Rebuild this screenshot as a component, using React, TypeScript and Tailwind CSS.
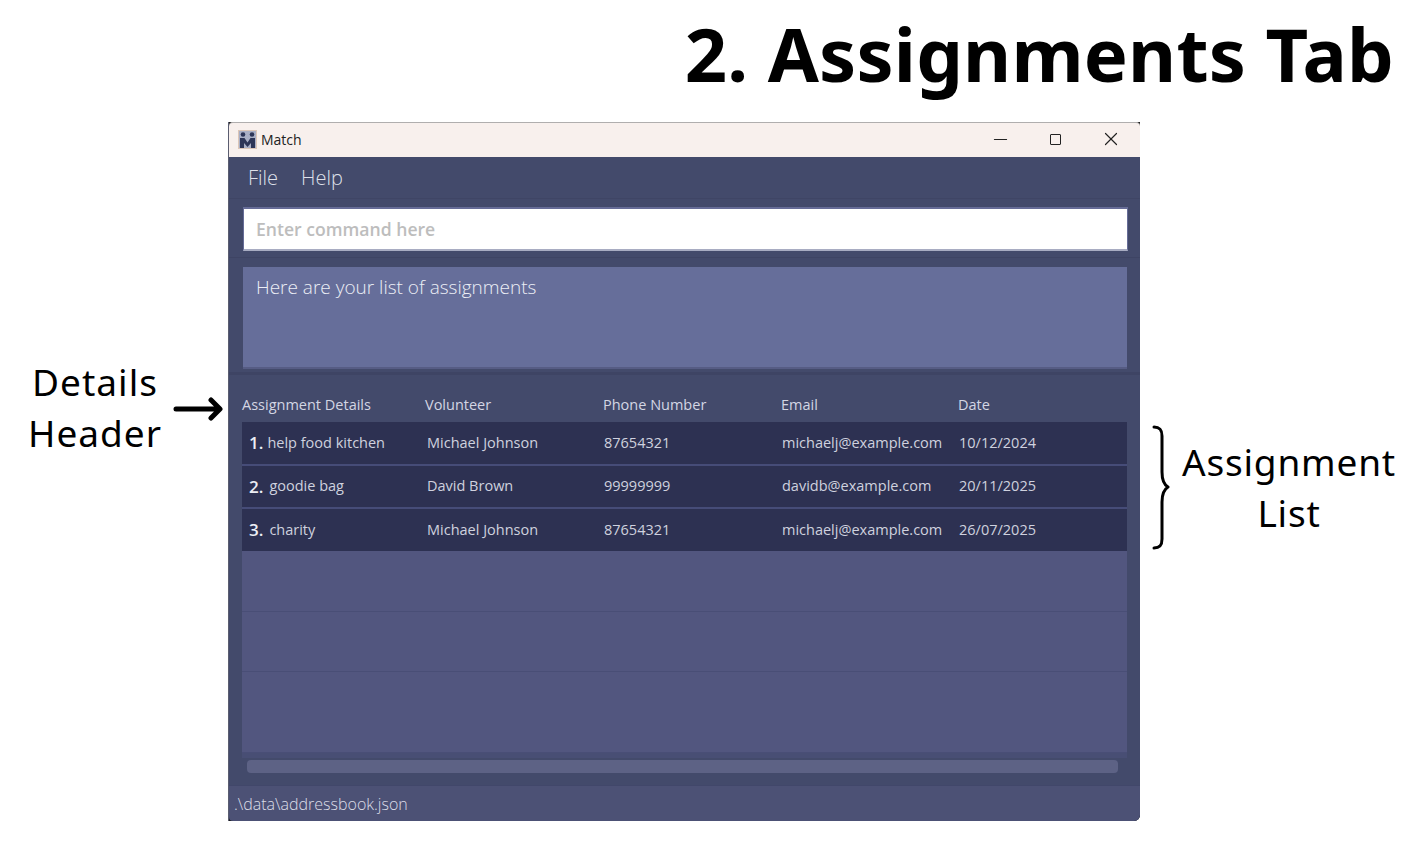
import { Minus, X } from 'lucide-react';

const columns = ['Assignment Details', 'Volunteer', 'Phone Number', 'Email', 'Date'];

const assignments = [
  { num: '1.', name: 'help food kitchen', gap: 'ml-[4px]', row: 'h-[43.500px] border-b-2', volunteer: 'Michael Johnson', phone: '87654321', email: 'michaelj@example.com', date: '10/12/2024' },
  { num: '2.', name: 'goodie bag', gap: 'ml-[6px]', row: 'h-[43.500px] border-b-2', volunteer: 'David Brown', phone: '99999999', email: 'davidb@example.com', date: '20/11/2025' },
  { num: '3.', name: 'charity', gap: 'ml-[6px]', row: 'h-[42px]', volunteer: 'Michael Johnson', phone: '87654321', email: 'michaelj@example.com', date: '26/07/2025' },
];

const AppLogo = () => (
  <svg width="19" height="19" viewBox="0 0 19 19" className="shrink-0">
    <rect width="19" height="19" fill="#dcc6b8" />
    <rect x="1" y="1" width="17" height="17" fill="#a9afc6" />
    <circle cx="5" cy="4.500" r="2.300" fill="#2d3558" />
    <circle cx="14" cy="4.500" r="2.300" fill="#2d3558" />
    <path d="M2 8h4.500l3 4.500 3-4.500H17v10h-4v-5l-3.500 4L6 13v5H2z" fill="#2d3558" />
  </svg>
);

export default function App() {
  return (
    <div className="w-[1414px] h-[844px] overflow-hidden bg-white text-black font-['Noto_Sans',sans-serif]">
      {/* Page title */}
      <div className="h-[122px] pr-[20px] pt-[9px] text-right text-[74px] leading-[90px] font-bold tracking-[0.2px] whitespace-nowrap">
        2. Assignments Tab
      </div>

      <div className="flex">
        {/* Left annotation */}
        <div className="w-[228px] shrink-0 flex items-start pt-[234px] pl-[25px]">
          <div className="w-[140px] text-center text-[37px] leading-[51px] tracking-[1px] shrink-0">
            <div>Details</div>
            <div>Header</div>
          </div>
          <svg width="50" height="26" viewBox="0 0 50 26" className="ml-[8px] mt-[40px] shrink-0" fill="none" stroke="#000" strokeWidth="5" strokeLinecap="round" strokeLinejoin="round">
            <path d="M3 13h43M38 4l9 9-9 9" />
          </svg>
        </div>

        {/* App window */}
        <div className="w-[912px] h-[699px] shrink-0 flex flex-col bg-[#434a6b] border-l border-[#5a5d70] rounded-br-[6px]">
          <div className="h-[35px] shrink-0 bg-[#1c1c1c]">
            <div className="h-full flex items-center pb-[2px] rounded-t-[4px] bg-[#f8f0ed] border-t border-[#b0aeae] font-['Open_Sans',sans-serif] text-[14px] text-[#222]">
              <div className="ml-[9px]"><AppLogo /></div>
              <span className="ml-[4px]">Match</span>
              <div className="ml-auto flex items-center text-[#222]">
                <Minus size={21} strokeWidth={1.2} className="mr-[39px]" />
                <div className="w-[11px] h-[11px] rounded-[1px] border-[1.5px] border-[#222] mr-[39px]" />
                <X size={22} strokeWidth={1.3} className="mr-[18px]" />
              </div>
            </div>
          </div>

          <div className="h-[42px] shrink-0 flex items-center pl-[19px] gap-[23px] text-[20px] font-light text-[#dfe1ea] border-b border-[#3f4565] font-['Open_Sans',sans-serif]">
            <span>File</span>
            <span>Help</span>
          </div>

          <div className="h-[59px] shrink-0 pl-[14px] pr-[12px] pt-[8px] border-b border-[#3e4464]">
            <div className="h-[44px] bg-white border-t-2 border-x border-[#666c97] border-b-2 border-b-[#a8acc2] flex items-center pl-[12px] text-[17.600px] font-semibold text-[#bdbdbd] font-['Open_Sans',sans-serif]">
              Enter command here
            </div>
          </div>

          <div className="h-[117px] shrink-0 pl-[14px] pr-[13px] pt-[9px] border-b-[3px] border-[#3e4464]">
            <div className="h-[102px] bg-[#666e9a] border-b-2 border-[#565c84] pl-[13px] pt-[6px] text-[19px] leading-[28px] font-light text-[#eceef6] font-['Open_Sans',sans-serif]">
              Here are your list of assignments
            </div>
          </div>

          <div className="flex-1 min-h-0 flex flex-col pl-[13px] pr-[13px] text-[14.500px] font-['Open_Sans',sans-serif]">
            {/* Details header */}
            <div className="h-[47px] shrink-0 grid grid-cols-[183px_178px_178px_177px_1fr] items-end pb-[6px] text-[#d3d6e4]">
              {columns.map((col) => (
                <div key={col}>{col}</div>
              ))}
            </div>

            {/* Assignment list */}
            <div className="h-[336px] shrink-0 flex flex-col bg-[#52567f] border-b-[5px] border-[#484e74]">
              {assignments.map((a) => (
                <div key={a.num} className={`${a.row} shrink-0 grid grid-cols-[185px_177px_178px_177px_1fr] items-center whitespace-nowrap bg-[#2d3152] border-[#464c78] text-[#cfd1df]`}>
                  <div className="flex items-center pl-[7px]">
                    <span className="text-[17px] font-semibold text-[#eceef5]">{a.num}</span>
                    <span className={a.gap}>{a.name}</span>
                  </div>
                  <div>{a.volunteer}</div>
                  <div>{a.phone}</div>
                  <div>{a.email}</div>
                  <div>{a.date}</div>
                </div>
              ))}
              <div className="h-[61px] shrink-0 border-b border-[#494e76]" />
              <div className="h-[60px] shrink-0 border-b border-[#494e76]" />
              <div className="h-[81px] shrink-0 border-b border-[#494e76]" />
            </div>

            {/* Horizontal scrollbar */}
            <div className="pt-[2px] pl-[5px] pr-[9px]">
              <div className="h-[13px] rounded-[4px] bg-[#5d6285]" />
            </div>
          </div>

          <div className="h-[36px] shrink-0 bg-[#1c1c1c] rounded-br-[6px]">
            <div className="h-full flex items-center pl-[5px] bg-[#4c5175] rounded-bl-[4px] rounded-br-[6px] border-t border-[#41476a] text-[16px] font-light text-[#dcdee8] font-['Open_Sans',sans-serif]">
              .\data\addressbook.json
            </div>
          </div>
        </div>

        {/* Right annotation */}
        <div className="flex-1 min-w-0 flex items-start pt-[303px] pl-[11px]">
          <svg width="20" height="126" viewBox="0 0 20 126" className="shrink-0" fill="none" stroke="#000" strokeWidth="3" strokeLinecap="round" strokeLinejoin="round">
            <path d="M3 2c6 0 8 3 8 9v36c0 7 1 12 6 15-5 3-6 8-6 15v37c0 6-2 9-8 9" />
          </svg>
          <div className="ml-[10px] w-[216px] shrink-0 text-center text-[37px] leading-[51px] tracking-[0.8px] pt-[11px]">
            <div>Assignment</div>
            <div>List</div>
          </div>
        </div>
      </div>
    </div>
  );
}
